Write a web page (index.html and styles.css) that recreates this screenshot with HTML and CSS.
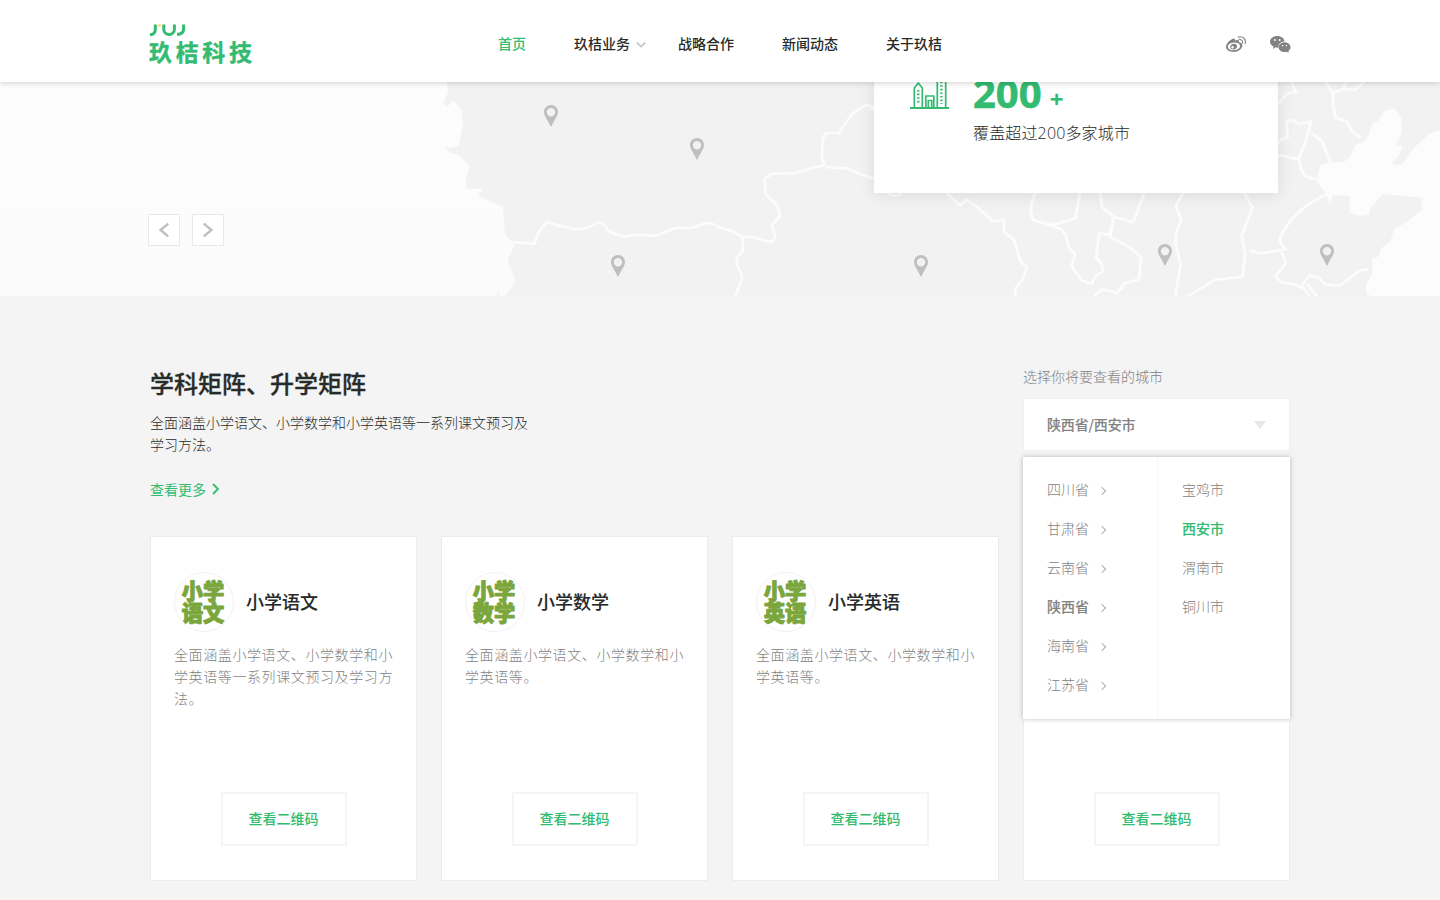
FILE: index.html
```
<!DOCTYPE html>
<html lang="zh-CN">
<head>
<meta charset="utf-8">
<title>玖桔科技</title>
<link rel="stylesheet" href="styles.css">
</head>
<body>
<header class="header">
  <div class="wrap header-row">
    <a class="logo">
      <svg width="104" height="46" viewBox="150 23 104 46">
        <g fill="none" stroke="#32bb71" stroke-width="3">
          <path d="M155.300 24.500v5q0 5-5.300 5.200M163.800 24.500v4.700a5.300 5.300 0 0 0 10.600 0v-4.700M183.600 24.500v4.500q0 5.200-6.600 5.400"/>
        </g>
        <path d="M158 24.500h3.200v1.300l-1.600 1-1.600-1z" fill="#ffd35c"/>
        <text class="logo-name" x="149" y="61" textLength="103" lengthAdjust="spacing">玖桔科技</text>
      </svg>
    </a>
    <nav class="nav">
      <a class="active">首页</a>
      <a class="has-sub">玖桔业务<svg class="nav-arrow" width="10" height="6" viewBox="0 0 10 6"><path d="M.7.7 5 4.700 9.300.7" fill="none" stroke="#c4c4c4" stroke-width="1.700"/></svg></a>
      <a>战略合作</a>
      <a>新闻动态</a>
      <a>关于玖桔</a>
    </nav>
    <div class="social">
      <svg width="20" height="17" viewBox="0 0 20 17"><path fill="#828282" fill-rule="evenodd" d="M7.500 2.500c1-.3 1.800.5 1.300 2.100 2.500-1 4.700-.8 4.200 1.700 2.200.4 3.300 1.500 3.300 3.200 0 3.300-4 6.500-8.600 6.500C3.500 16 0 14 0 10.800 0 7.500 4.500 3.200 7.500 2.500zM7.900 6.600c-3.700.2-6.200 2.100-6 4.300.2 2.300 3 3.700 6.500 3.400 3.400-.3 6-2.300 5.700-4.500-.2-2.100-2.900-3.400-6.200-3.200zM8 7.800c2 0 3.300 1.100 3 2.900-.3 1.800-1.900 2.900-3.900 2.900s-3.300-1.300-2.900-3C4.600 9 6.100 7.800 8 7.800zM6.500 10a1.300 1.300 0 1 0 .1 2.600 1.300 1.300 0 0 0-.1-2.600z"/><path d="M12.500 1.100c4.300-1.300 8 2.200 6.600 6.500M12.900 3.700c2.300-.6 4.300 1.200 3.500 3.500" fill="none" stroke="#828282" stroke-width="1.100" stroke-linecap="round"/></svg>
      <svg width="21" height="17" viewBox="0 0 21 17"><path fill="#828282" d="M7.300 0c4 0 7.200 2.500 7.300 5.600-4.100 0-6.700 2.700-5.900 6-1.100.1-2.200 0-3.300-.3L2.800 12.900l.7-2.500C1.300 9.200 0 7.700 0 5.700 0 2.600 3.200 0 7.300 0z"/><path fill="#828282" d="M14.500 6.300c3.300 0 6 2.200 6 4.900 0 1.600-.9 2.900-2.200 3.800l.5 1.900-2.100-1.100c-3.900 1.100-8.100-1-8.100-4.600 0-2.700 2.600-4.900 5.900-4.900z"/><g fill="#fff"><circle cx="4.900" cy="3.900" r="1"/><circle cx="9.600" cy="3.900" r="1"/><circle cx="12.600" cy="9.600" r=".8"/><circle cx="16.400" cy="9.600" r=".8"/></g></svg>
    </div>
  </div>
</header>

<section class="hero">
  <svg class="map" width="1440" height="214" viewBox="0 82 1440 214">
    <defs>
      <linearGradient id="fade" x1="0" y1="0" x2="0" y2="1"><stop offset="0" stop-color="#fdfdfd"/><stop offset="1" stop-color="#fbfbfb"/></linearGradient>
      <g id="pin"><path fill="#bfbfbf" fill-rule="evenodd" d="M0-22c4 0 7 3 7 7 0 3.500-3 7-7 15-4-8-7-11.500-7-15 0-4 3-7 7-7zm0 3a4.200 4.200 0 1 0 0 8.400 4.200 4.200 0 0 0 0-8.400z"/></g>
    </defs>
    <rect x="0" y="82" width="1440" height="214" fill="#f2f2f2"/>
    <g transform="translate(430 80) scale(.33333)">
      <path fill="url(#fade)" d="M-1290 6H50l5 30-16 34 12 11 19-18 24 24 4 46-12 66-41 5 20 17 20 2 32 34-2 20-8 22 2 27h52l-18 20 76 36 5 72q5 28 35 33l-26 52q5 18 16 42 12 25 0 38-10 16-22 26V650H209l-4-26-4 26H-1290z"/>
      <path class="border" d="M254 487l60 4 12-36 24-28 38 10 50 11q35 0 67-22l18 8q10 22 30 27l30 9q35-7 65-4h34l54-22h50q15-5 42-15 20 0 38 12l40 12 32 18h32q24 12 58 14l8-16-10-32 24-30-8-30-36-36-2-46 24-14 68-2 40-12 50-12-10-16 2-60 8-20h40l40-56 40-28 30 6M1186 261l70 5 40 18 40 14M938 470v42l-18 24 2 20q14 24 14 40l-20 52"/>
    </g>
    <g transform="translate(870 80) scale(.36364 .33333)">
      <path fill="#fcfcfc" d="M1580 148l-38 10-46 45-32 50-16 3-14-8 20-18 10-30-16-4 12-33q10-60-20-78l-26 9-18 30-14 6-12 36-12 22-22 6-16 36-14 14-66 8-12 50 26 40 10 32 10-30 45 5v50l30 9 24-4 2-20 37-42 110 12-8 20 6 16-54 42-24 16-12 38-24 18-6 24-20 10 4 36-20 40 2 28 50 24 14 6 16 32H1580z"/>
      <path class="border" d="M0 84l11 6M0 290l11 8M48 342l22 6 18-8M212 340l36 36 18-16 30 22 42 42 30-4v34l28 26 18 64 18 18-14 40-16 20-4 30-44 22M455 340q-20 36-8 78 40 20 74 12l44-16 12-76M484 432l40 14 16 22 6 34 18 20-10 36q16 26 30 44l26 10 10-24 22-14q-4-30-20-40l8-74 28 4 4-16M634 338l4 44 32 28 54 16 30-86M670 410l-10 60 54 32 32 30-6 66-40 12-26 34M616 648l22-20 40 10 18-14M862 338l-22 40 16 40-14 40-2 30 14 66-14 94M1028 338l24 44-30 86 10 54-8 68-76 10-76 50M1044 512l30 8 70-12q-26-20-10-50 40-78 132-120M1130 510l14 40-30 38 20 20 30 4 20 10 24-36 26 6 16 20 40 6 60-48 20-2M1186 616l24 34M1202 612l28 38M1158 6l14 30-26 6-22 28M1253 6l20 34 30-14 6-20M1303 26l30 4 26-24M1273 40v34l8 40 30 10 14 30 24 18M1122 190q10-18 26-16l-2-48q10-12 34 6l32-8-14 62-20 52-30-8-26-4M1214 158l28 24 26 70M1180 238q4 60 48 58"/>
    </g>
    <use href="#pin" x="551" y="127"/><use href="#pin" x="697" y="160"/><use href="#pin" x="618" y="277"/><use href="#pin" x="921" y="277"/><use href="#pin" x="1165" y="266"/><use href="#pin" x="1327" y="266"/>
  </svg>
  <div class="wrap hero-row">
    <div class="pager">
      <button class="page-btn" aria-label="上一页"><svg width="10" height="14" viewBox="0 0 10 14"><path d="M9.300.6 1.500 7l7.800 6.400" fill="none" stroke="#bfbfbf" stroke-width="2.400"/></svg></button>
      <button class="page-btn" aria-label="下一页"><svg width="10" height="14" viewBox="0 0 10 14"><path d="M.7.6 8.500 7 .7 13.400" fill="none" stroke="#bfbfbf" stroke-width="2.400"/></svg></button>
    </div>
    <div class="stat">
      <svg class="city" width="40" height="34" viewBox="910 76 40 34">
        <g fill="none" stroke="#32bb71" stroke-width="1.700"><path d="M914.300 108V88l4-5 4 5v20M937.300 108V78M945.700 78v30M925.800 108V96h8v12M928.300 108v-7.500h3.400v7.500"/><path d="M910 108h39" stroke-width="2"/><path d="M918.300 90v14M941.400 78v26" stroke-width="2.400" stroke-dasharray="1.600 2"/></g>
      </svg>
      <div>
        <div class="stat-num">200<span class="plus">+</span></div>
        <div class="stat-text">覆盖超过200多家城市</div>
      </div>
    </div>
  </div>
</section>

<main class="wrap matrix">
  <div class="intro">
    <div class="intro-text">
      <h2>学科矩阵、升学矩阵</h2>
      <p>全面涵盖小学语文、小学数学和小学英语等一系列课文预习及<br>学习方法。</p>
      <a class="more"><span>查看更多</span><svg width="8" height="12" viewBox="0 0 8 12"><path d="M1 1l5 5-5 5" fill="none" stroke="#32bb71" stroke-width="1.800"/></svg></a>
    </div>
    <div class="picker">
      <div class="picker-label">选择你将要查看的城市</div>
      <div class="select"><span>陕西省/西安市</span><i class="caret"></i></div>
      <div class="menu">
        <ul class="provinces">
          <li>四川省<i class="chev"></i></li><li>甘肃省<i class="chev"></i></li><li>云南省<i class="chev"></i></li><li class="on">陕西省<i class="chev"></i></li><li>海南省<i class="chev"></i></li><li>江苏省<i class="chev"></i></li>
        </ul>
        <ul class="cities"><li>宝鸡市</li><li class="picked">西安市</li><li>渭南市</li><li>铜川市</li></ul>
      </div>
    </div>
  </div>
  <div class="cards">
    <article class="card">
      <div class="card-head"><svg class="badge" width="60" height="60" viewBox="0 0 60 60"><text x="7" y="26.500">小学</text><text x="7" y="50">语文</text></svg><h3>小学语文</h3></div>
      <p>全面涵盖小学语文、小学数学和小<br>学英语等一系列课文预习及学习方<br>法。</p>
      <a class="qr">查看二维码</a>
    </article>
    <article class="card">
      <div class="card-head"><svg class="badge" width="60" height="60" viewBox="0 0 60 60"><text x="7" y="26.500">小学</text><text x="7" y="50">数学</text></svg><h3>小学数学</h3></div>
      <p>全面涵盖小学语文、小学数学和小<br>学英语等。</p>
      <a class="qr">查看二维码</a>
    </article>
    <article class="card">
      <div class="card-head"><svg class="badge" width="60" height="60" viewBox="0 0 60 60"><text x="7" y="26.500">小学</text><text x="7" y="50">英语</text></svg><h3>小学英语</h3></div>
      <p>全面涵盖小学语文、小学数学和小<br>学英语等。</p>
      <a class="qr">查看二维码</a>
    </article>
    <article class="card"><a class="qr">查看二维码</a></article>
  </div>
</main>
</body>
</html>
```
FILE: styles.css
```
* { box-sizing: border-box; margin: 0; padding: 0; }
body {
  background: #f4f4f4;
  color: #262b29;
  font: 14px/22px "Noto Sans CJK SC", sans-serif;
  height: 900px;
  overflow: hidden;
}
ul { list-style: none; }
i { display: block; }
svg { display: block; flex: none; }
.wrap { width: 1140px; margin: 0 auto; }

.header { position: relative; z-index: 5; height: 82px; background: #fff; box-shadow: 0 1px 6px rgba(0,0,0,.18); }
.header-row { display: flex; height: 82px; }
.logo { width: 348px; padding-top: 23px; }
.logo svg { overflow: visible; }
.logo-name { font-size: 23px; font-weight: 700; fill: #32bb71; stroke: #32bb71; stroke-width: .4; stroke-linejoin: round; }
.nav { display: flex; flex: 1; gap: 48px; padding-top: 32px; font-weight: 500; }
.nav a { height: 22px; }
.nav .active { color: #32bb71; }
.has-sub { position: relative; }
.nav-arrow { position: absolute; left: 62px; top: 10px; }
.social { display: flex; gap: 24px; margin-right: -1px; padding-top: 36px; }

.hero { position: relative; height: 214px; }
.map { position: absolute; left: 0; top: 0; }
.border { fill: none; stroke: #fcfcfc; stroke-width: 8; stroke-linejoin: round; }
.hero-row { position: relative; display: flex; height: 214px; }
.pager { display: flex; gap: 12px; width: 726px; margin-left: -2px; padding-top: 132px; }
.page-btn { display: flex; align-items: center; justify-content: center; width: 32px; height: 32px; background: #fff; border: 1px solid #e8e8e8; }
.stat { display: flex; gap: 23px; width: 404px; height: 117px; margin-top: -6px; padding-left: 36px; background: #fff; box-shadow: 0 2px 16px rgba(0,0,0,.1); }
.stat-num { height: 46px; margin-top: -12px; font: 700 40px/58px "Open Sans", sans-serif; -webkit-text-stroke: .6px; color: #32bb71; }
.plus { margin-left: 8px; font-size: 24px; -webkit-text-stroke: 0; }
.stat-text { font: 300 16px/24px "Open Sans", "Noto Sans CJK SC", sans-serif; letter-spacing: .15px; margin-top: 11px; }

.intro { display: flex; justify-content: space-between; height: 240px; padding-top: 69px; }
h2 { font-size: 24px; font-weight: 500; line-height: 36px; -webkit-text-stroke: .3px; }
.intro-text p { margin-top: 10px; font-weight: 300; }
.more { display: flex; align-items: center; gap: 6px; margin-top: 23px; color: #32bb71; }
.picker { position: relative; width: 267px; color: #828282; }
.picker-label { font-weight: 300; }
.select { display: flex; align-items: center; justify-content: space-between; height: 53px; margin-top: 11px; padding: 0 23px 0 24px; background: #fff; border: 1px solid #f0f0f0; font-weight: 500; }
.select span { margin: -2px 0 0 -1px; letter-spacing: -.15px; -webkit-text-stroke: .1px; }
.caret { border: 6px solid transparent; border-top: 8px solid #e8e8e8; border-bottom: 0; }
.menu { position: absolute; z-index: 2; left: 0; top: 92px; display: flex; width: 267px; height: 262px; background: #fff; box-shadow: 0 0 5px rgba(0,0,0,.25); font-weight: 300; }
.menu ul { padding: 21px 0 0 24px; }
.menu li { display: flex; align-items: center; height: 22px; margin-bottom: 17px; }
.provinces { width: 135px; border-right: 1px solid #f8f8f8; }
.chev { width: 6px; height: 6px; margin: 3px 0 0 10px; border: solid #b0b0b0; border-width: 1px 1px 0 0; transform: rotate(45deg); }
.menu .on, .menu .picked { font-weight: 500; -webkit-text-stroke: .1px; }
.picked { color: #32bb71; }

.cards { display: grid; grid-template-columns: repeat(4, 267px); gap: 24px; }
.card { display: flex; flex-direction: column; height: 345px; padding: 35px 23px 34px; background: #fff; border: 1px solid #ebebeb; }
.card-head { display: flex; align-items: center; gap: 12px; height: 60px; }
.badge { border: 1px solid #f2f2f2; border-radius: 50%; }
.badge text { font-size: 22px; font-weight: 900; fill: #7aa63c; stroke: #7aa63c; stroke-width: 1.1; stroke-linejoin: round; }
h3 { margin-top: -3px; font-size: 18px; font-weight: 500; line-height: 26px; -webkit-text-stroke: .1px; }
.card p { margin-top: 11px; letter-spacing: .6px; font-weight: 300; color: #828282; white-space: nowrap; }
.qr { display: flex; align-items: center; justify-content: center; width: 126px; height: 54px; margin: auto auto 0; padding-bottom: 2px; border: 2px solid #f5f5f5; color: #32bb71; font-weight: 500; }
```
